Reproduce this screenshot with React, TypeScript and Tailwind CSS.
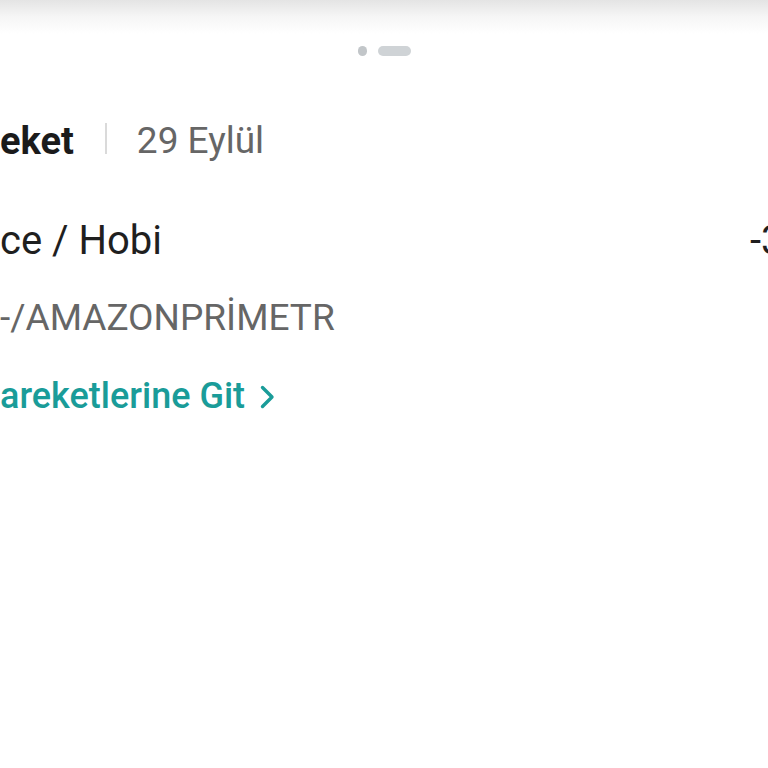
import React from "react";

const App: React.FC = () => {
  return (
    <div className="w-full h-[768px] bg-white overflow-hidden font-['Roboto','Liberation_Sans',sans-serif]">
      {/* üstteki gölge */}
      <div className="h-[34px] bg-gradient-to-b from-[#e4e4e4] via-[#f6f6f6] to-white" />

      {/* sayfa göstergesi */}
      <div className="flex justify-center items-center gap-[11px] mt-[12px] h-[10px]">
        <div className="w-[9px] h-[10px] rounded-full bg-[#c2c6c9]" />
        <div className="w-[33px] h-[10px] rounded-full bg-[#cfd3d6]" />
      </div>

      {/* başlık */}
      <div className="flex items-center mt-[63px] h-[44px] whitespace-nowrap">
        <span className="text-[38px] leading-[44px] font-bold text-[#1b1b1b]">eket</span>
        <div className="w-[2px] h-[31px] bg-[#dadada] ml-[31px] mt-[-6px]" />
        <span className="text-[37px] leading-[44px] text-[#666666] ml-[30px]">29 Eylül</span>
      </div>

      {/* kategori ve tutar */}
      <div className="flex mt-[56px] h-[44px] whitespace-nowrap">
        <span className="flex-1 text-[40px] leading-[44px] text-[#1f1f1f]">ce / Hobi</span>
        <span className="w-[18px] shrink-0 text-[40px] leading-[44px] text-[#1f1f1f]">-349,99 TL</span>
      </div>

      <div className="mt-[33px] h-[44px] text-[37px] leading-[44px] text-[#666666] whitespace-nowrap">
        -/AMAZONPRİMETR
      </div>

      <div className="flex items-center mt-[34px] h-[44px] whitespace-nowrap">
        <span className="text-[36px] leading-[44px] font-medium text-[#1a9c99]">areketlerine Git</span>
        <svg
          className="ml-[15px] mt-[2px]"
          width="15"
          height="24"
          viewBox="0 0 15 24"
          fill="none"
          stroke="#1a9c99"
          strokeWidth="3.4"
          strokeLinecap="round"
          strokeLinejoin="round"
        >
          <path d="M2.5 2.5 L12 12 L2.5 21.5" />
        </svg>
      </div>
    </div>
  );
};

export default App;
